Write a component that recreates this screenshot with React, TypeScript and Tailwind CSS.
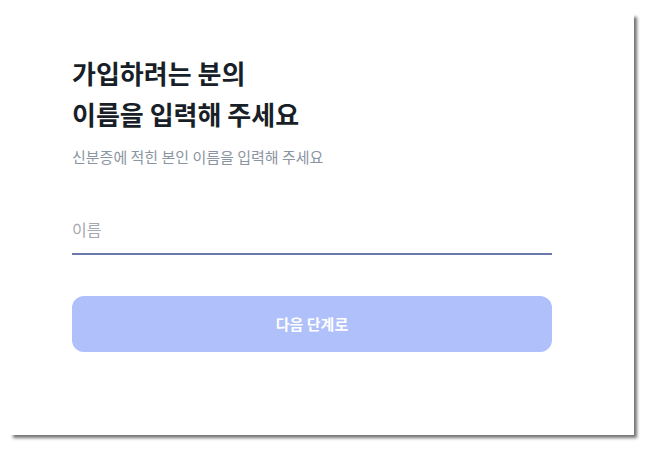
import { useState } from 'react';

const font = { fontFamily: '"Noto Sans CJK KR", "Noto Sans", sans-serif' };

export default function App() {
  const [name, setName] = useState('');

  return (
    <div className="min-h-screen bg-white pl-[10px] pt-[14px]" style={font}>
      <div className="w-[624px] h-[421px] bg-white shadow-[3px_3px_3px_rgba(0,0,0,0.55)] pl-[62px] pt-[38px]">
        <h1 className="text-[26px] leading-[41px] font-bold text-[#191f28]">
          가입하려는 분의
          <br />
          이름을 입력해 주세요
        </h1>
        <p className="mt-[13px] text-[15px] leading-[20px] text-[#8b95a1]">
          신분증에 적힌 본인 이름을 입력해 주세요
        </p>

        <input
          autoFocus
          value={name}
          onChange={(e) => setName(e.target.value)}
          placeholder="이름"
          className="mt-[37px] block w-[480px] h-[51px] border-b-2 border-[#6c7aab] text-[16px] text-[#191f28] placeholder:text-[#a5a8ae] outline-none caret-black"
        />

        <button
          type="button"
          className="mt-[41px] block w-[480px] h-14 rounded-xl bg-[#afc0fb] text-white text-[15px] font-bold"
        >
          다음 단계로
        </button>
      </div>
    </div>
  );
}
